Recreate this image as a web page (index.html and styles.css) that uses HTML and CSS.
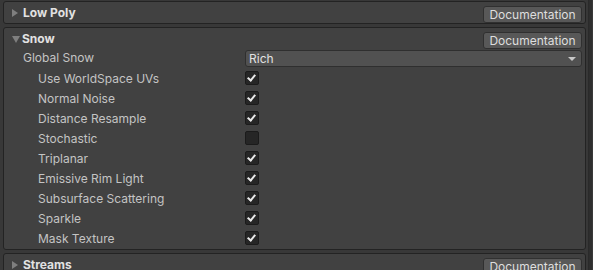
FILE: index.html
```html
<!DOCTYPE html>
<html>
<head>
<meta charset="utf-8">
<link rel="stylesheet" href="styles.css">
</head>
<body>
<div class="inspector">
  <div class="panels">
    <section class="panel">
      <div class="header">
        <span class="fold closed"></span>
        <span class="title">Low Poly</span>
        <button class="doc">Documentation</button>
      </div>
    </section>
    <section class="panel body">
      <div class="header">
        <span class="fold open"></span>
        <span class="title">Snow</span>
        <button class="doc">Documentation</button>
      </div>
      <div class="row main">
        <span class="label">Global Snow</span>
        <div class="dropdown"><span>Rich</span><span class="arrow"></span></div>
      </div>
      <div class="row"><span class="label sub">Use WorldSpace UVs</span><span class="check on"></span></div>
      <div class="row"><span class="label sub">Normal Noise</span><span class="check on"></span></div>
      <div class="row"><span class="label sub">Distance Resample</span><span class="check on"></span></div>
      <div class="row"><span class="label sub">Stochastic</span><span class="check"></span></div>
      <div class="row"><span class="label sub">Triplanar</span><span class="check on"></span></div>
      <div class="row"><span class="label sub">Emissive Rim Light</span><span class="check on"></span></div>
      <div class="row"><span class="label sub">Subsurface Scattering</span><span class="check on"></span></div>
      <div class="row"><span class="label sub">Sparkle</span><span class="check on"></span></div>
      <div class="row"><span class="label sub">Mask Texture</span><span class="check on"></span></div>
    </section>
    <section class="panel">
      <div class="header">
        <span class="fold closed"></span>
        <span class="title">Streams</span>
        <button class="doc">Documentation</button>
      </div>
    </section>
  </div>
  <div class="scrollbar"></div>
</div>
</body>
</html>
```
FILE: styles.css
```css
html, body {
  margin: 0;
  padding: 0;
  background: #383838;
  font-family: Inter, "Noto Sans", sans-serif;
  font-size: 12px;
  color: #c4c4c4;
  overflow: hidden;
}
.inspector {
  display: flex;
  height: 270px;
}
.panels {
  width: 583px;
  margin-left: 3px;
  padding-top: 1px;
  display: flex;
  flex-direction: column;
  gap: 3px;
}
.panel {
  background: #414141;
  border: 1px solid #232323;
  border-radius: 3px;
}
.panel.body {
  padding-bottom: 1px;
}
.header {
  display: flex;
  align-items: flex-start;
  height: 21px;
}
.fold {
  width: 0;
  height: 0;
  margin-left: 8px;
}
.fold.closed {
  border-top: 4.5px solid transparent;
  border-bottom: 4.5px solid transparent;
  border-left: 6px solid #7f7f7f;
  margin-right: 5px;
  margin-top: 6.5px;
}
.fold.open {
  border-left: 4.5px solid transparent;
  border-right: 4.5px solid transparent;
  border-top: 7px solid #7f7f7f;
  margin-right: 2px;
  margin-top: 7.5px;
}
.title {
  font-weight: bold;
  color: #e2e2e2;
  line-height: 22px;
  font-size: 12px;
}
.doc {
  margin-left: auto;
  margin-right: 3px;
  margin-top: 4px;
  width: 99px;
  height: 17px;
  background: #585858;
  border: 1px solid #303030;
  border-radius: 3px;
  color: #dedede;
  font-family: Inter, "Noto Sans", sans-serif;
  font-size: 12px;
  padding: 0;
  line-height: 15px;
}
.row {
  display: flex;
  align-items: center;
  height: 20px;
}
.row.main {
  height: 19px;
  align-items: flex-start;
  padding-top: 0;
}
.label {
  width: 222px;
  padding-left: 19px;
  padding-top: 1px;
  line-height: 16px;
}
.row.main .label {
  padding-top: 1px;
}
.label.sub {
  width: 207px;
  padding-left: 34px;
}
.dropdown {
  flex: 1;
  height: 15px;
  margin-top: 1px;
  margin-right: 3px;
  background: #515151;
  border: 1px solid #2f2f2f;
  border-radius: 3px;
  display: flex;
  align-items: center;
  padding-left: 3px;
  color: #e2e2e2;
}
.arrow {
  margin-left: auto;
  margin-right: 5px;
  width: 0;
  height: 0;
  border-left: 4px solid transparent;
  border-right: 4px solid transparent;
  border-top: 4px solid #c8c8c8;
}
.check {
  width: 12px;
  height: 12px;
  background: #262626;
  border: 1px solid #1b1b1b;
  border-radius: 2px;
  position: relative;
}
.check.on::after {
  content: "";
  position: absolute;
  left: 3px;
  top: 1px;
  width: 3px;
  height: 6px;
  border-right: 2px solid #e8e8e8;
  border-bottom: 2px solid #e8e8e8;
  transform: rotate(40deg);
}
.scrollbar {
  width: 3px;
  margin-left: 2px;
  border-left: 1px solid #2a2a2a;
  background: #2e2e2e;
}
```
